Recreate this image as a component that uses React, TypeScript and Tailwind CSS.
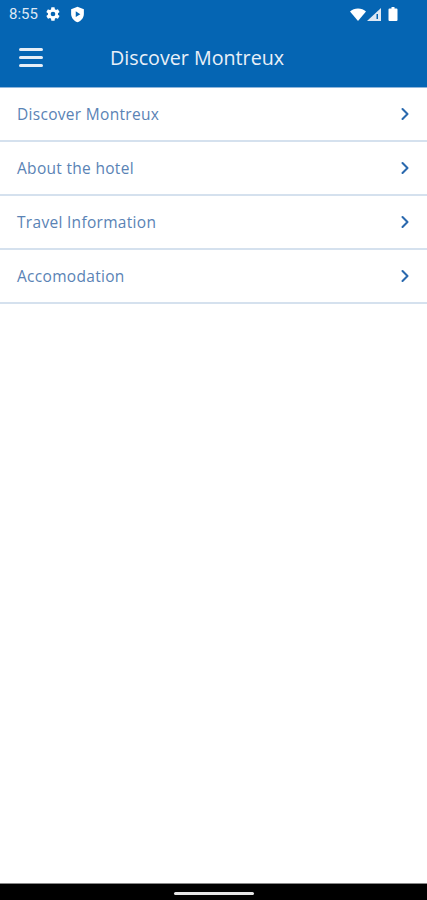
import { ChevronRight } from "lucide-react";

const items = ["Discover Montreux", "About the hotel", "Travel Information", "Accomodation"];

function StatusBar() {
  return (
    <div className="h-[28px] flex items-center justify-between pl-[9px] pr-[29px] text-white">
      <div className="flex items-center gap-[7px]">
        <span className="text-[15px] font-['Roboto',sans-serif] text-[#dfe8f3]">8:55</span>
        {/* settings gear */}
        <svg width="16" height="16" viewBox="0 0 24 24" fill="#fff">
          <path d="M19.4 13c.04-.33.06-.66.06-1s-.02-.67-.07-1l2.1-1.65a.5.5 0 0 0 .12-.64l-2-3.46a.5.5 0 0 0-.6-.22l-2.49 1a7.3 7.3 0 0 0-1.73-1l-.38-2.65A.49.49 0 0 0 13.92 2h-4a.49.49 0 0 0-.49.42l-.38 2.65c-.62.26-1.2.6-1.73 1l-2.49-1a.5.5 0 0 0-.6.22l-2 3.46a.49.49 0 0 0 .12.64L4.47 11a7.9 7.9 0 0 0 0 2l-2.11 1.65a.5.5 0 0 0-.12.64l2 3.46c.12.22.38.3.6.22l2.49-1c.53.4 1.11.74 1.73 1l.38 2.65c.04.24.25.42.49.42h4c.24 0 .45-.18.49-.42l.38-2.65c.62-.26 1.2-.6 1.73-1l2.49 1c.22.08.48 0 .6-.22l2-3.46a.5.5 0 0 0-.12-.64L19.4 13zM12 15.5a3.5 3.5 0 1 1 0-7 3.5 3.5 0 0 1 0 7z" />
        </svg>
        {/* shield */}
        <svg width="17" height="17" viewBox="0 0 24 24" className="ml-[1px]">
          <path fill="#fff" d="M12 1 3 4.500v6.600c0 5.600 3.800 10.500 9 11.900 5.200-1.400 9-6.300 9-11.900V4.500L12 1z" />
          <path fill="#0565b3" d="M9.500 7.500v8l6.500-4z" />
        </svg>
      </div>
      <div className="flex items-center">
        {/* wifi */}
        <svg width="16" height="13" viewBox="0 0 16 13" fill="#fff">
          <path d="M0 3.500C2 1.500 5 .5 8 .5s6 1 8 3l-8 9.500z" />
        </svg>
        {/* cell signal */}
        <svg width="14" height="13" viewBox="0 0 14 13" className="ml-[1px]">
          <path fill="#dfe8f3" d="M14 0v13H0z" />
          <path fill="#0565b3" d="M9.500 6h1.500v5H9.500z" />
        </svg>
        {/* battery */}
        <svg width="10" height="14" viewBox="0 0 9 14" fill="#fff" className="ml-[7px]">
          <path d="M3 0h3v1.500h2a1 1 0 0 1 1 1V13a1 1 0 0 1-1 1H1a1 1 0 0 1-1-1V2.500a1 1 0 0 1 1-1h2z" />
        </svg>
      </div>
    </div>
  );
}

export default function App() {
  return (
    <div className="w-full h-[900px] flex flex-col bg-white font-['Open_Sans',sans-serif]">
      {/* Header */}
      <div className="bg-[#0565b3] h-[88px] border-b border-[#8fb6dc]">
        <StatusBar />
        <div className="h-[59px] flex items-center pl-[19px]">
          <div className="w-[24px] flex flex-col gap-[5px]">
            <div className="h-[3px] bg-[#e6eef7] rounded-sm" />
            <div className="h-[3px] bg-[#e6eef7] rounded-sm" />
            <div className="h-[3px] bg-[#e6eef7] rounded-sm" />
          </div>
          <h1 className="ml-[67px] text-[19.7px] text-[#e9f0f8]">Discover Montreux</h1>
        </div>
      </div>

      {/* Menu list */}
      <div className="flex-1">
        {items.map((item) => (
          <div
            key={item}
            className="h-[54px] flex items-center justify-between pl-[17px] pr-[12px] border-b-2 border-[#d5e1ee]"
          >
            <span className="mt-[2px] text-[15.5px] tracking-[0.3px] text-[#5a83b5]">{item}</span>
            <ChevronRight size={20} strokeWidth={2.5} className="text-[#2a69ae]" />
          </div>
        ))}
      </div>

      {/* Nav bar */}
      <div className="h-[17px] bg-black flex justify-center pt-[8px] border-t border-[#888]">
        <div className="w-[80px] h-[3px] rounded-full bg-[#e5e5e5]" />
      </div>
    </div>
  );
}
